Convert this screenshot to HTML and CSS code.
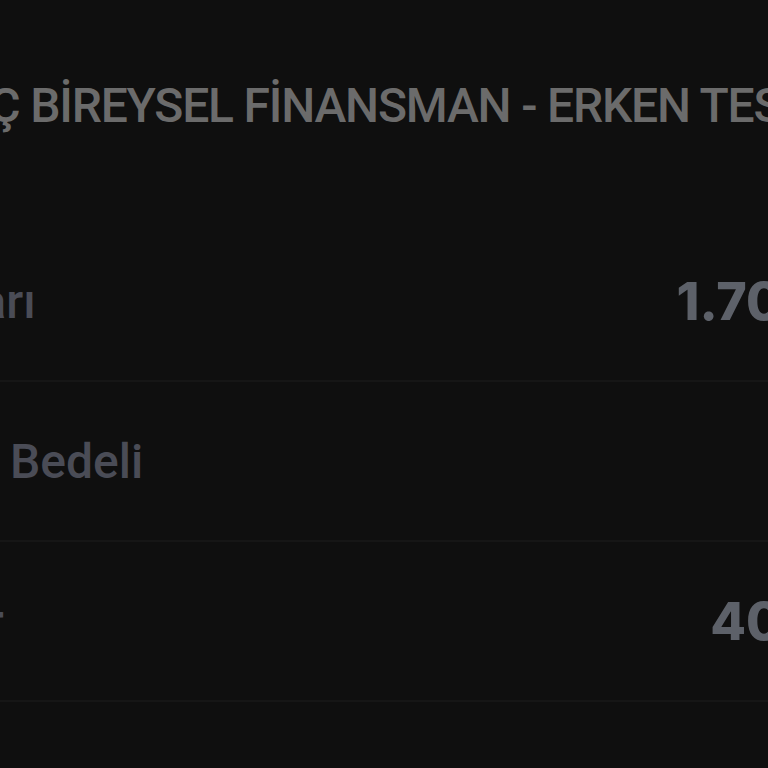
FILE: index.html
```html
<!DOCTYPE html>
<html lang="tr">

<head>
    <meta charset="UTF-8">
    <meta name="viewport" content="width=device-width, initial-scale=1.0">
    <title>Finansman</title>
    <link rel="stylesheet" href="styles.css">
</head>

<body>
    <div class="panel">
        <h1 class="title">KOÇ BİREYSEL FİNANSMAN - ERKEN TESLİM</h1>

        <div class="rows">
            <div class="row">
                <span class="label">Harç Tutarı</span>
                <span class="value">1.700 TL</span>
            </div>
            <div class="row">
                <span class="label">Ekspertiz Bedeli</span>
                <span class="value">0 TL</span>
            </div>
            <div class="row">
                <span class="label">Masraflar</span>
                <span class="value">400 TL</span>
            </div>
            <div class="row"></div>
        </div>
    </div>
</body>

</html>
```

FILE: styles.css
```css
html,
body {
    margin: 0;
    padding: 0;
    height: 100%;
    background-color: #0f0f0f;
    overflow: hidden;
}

body {
    font-family: Roboto, "Noto Sans", sans-serif;
}

.panel {
    width: 1096px;
    margin-left: -202px;
}

.title {
    margin: 0;
    padding-top: 78px;
    padding-left: 131px;
    height: 222px;
    box-sizing: border-box;
    font-size: 48px;
    font-weight: 500;
    line-height: 56px;
    letter-spacing: -1.2px;
    color: #6b6b6b;
    white-space: nowrap;
}

.rows {
    display: flex;
    flex-direction: column;
}

.row {
    display: flex;
    justify-content: space-between;
    align-items: center;
    height: 158px;
    border-bottom: 2px solid #161616;
}

.label {
    font-size: 48px;
    font-weight: 500;
    color: #4a4c56;
    white-space: nowrap;
}

.value {
    font-family: Inter, Roboto, sans-serif;
    font-size: 52px;
    font-weight: 800;
    font-variant-numeric: proportional-nums;
    color: #5d6169;
    white-space: nowrap;
}
```
